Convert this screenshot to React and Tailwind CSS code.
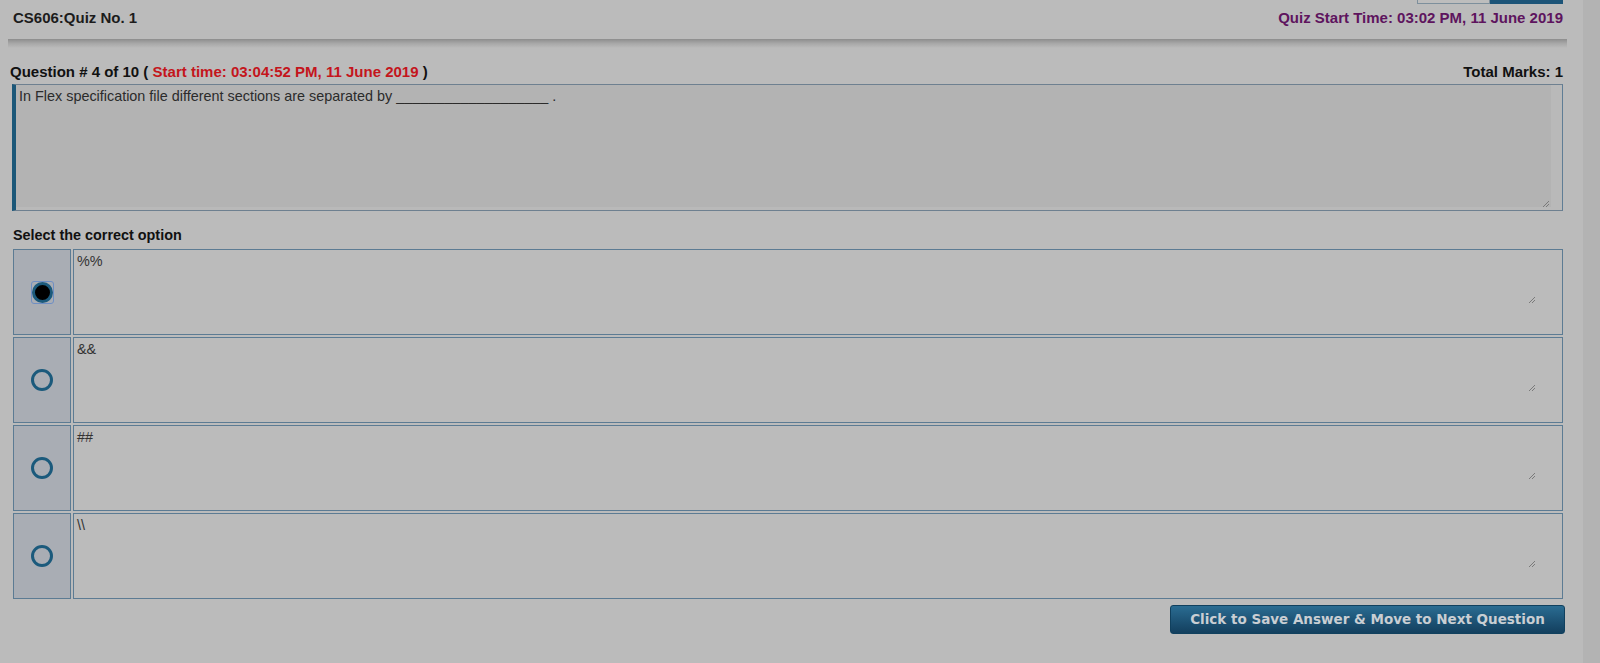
import React from "react";

const options = ["%%", "&&", "##", "\\\\"];

function Radio({ checked }) {
  if (checked) {
    return (
      <div className="w-[23px] h-[23px] rounded-[3px] border border-[#6f8fc4] flex items-center justify-center">
        <div className="w-[21px] h-[21px] rounded-full border-[3px] border-[#1b5a7c] bg-black" />
      </div>
    );
  }
  return <div className="w-[22px] h-[22px] rounded-full border-[3px] border-[#1b5a7c]" />;
}

function Grip() {
  return (
    <svg width="8" height="8" viewBox="0 0 8 8" className="absolute">
      <path d="M7 1 L1 7 M7 4 L4 7" stroke="#7a7a7a" strokeWidth="1" />
    </svg>
  );
}

export default function App() {
  return (
    <div
      className="w-[1600px] h-[663px] bg-[#bbbbbb] flex overflow-hidden"
      style={{ fontFamily: '"Liberation Sans", Arial, sans-serif' }}
    >
      <div className="w-[1583px] flex flex-col">
        {/* top cut-off buttons */}
        <div className="h-[4px] flex justify-end pr-[20px] overflow-hidden">
          <div className="w-[73px] h-[4px] bg-[#bdbdbd] border-x border-b border-[#7d8f9c]" />
          <div className="w-[73px] h-[4px] bg-[#1c5478]" />
        </div>
        {/* header */}
        <div className="h-[28px] flex items-center justify-between pl-[13px] pr-[20px]">
          <span className="text-[15px] font-bold text-[#1c1c1c]">CS606:Quiz No. 1</span>
          <span className="text-[15px] font-bold text-[#5e145e]">
            Quiz Start Time: 03:02 PM, 11 June 2019
          </span>
        </div>
        <div className="mt-[7px] ml-[8px] w-[1559px] h-[9px] bg-gradient-to-b from-[#8d8d8d] via-[#a8a8a8] to-[#bbbbbb]" />

        <div className="ml-[10px] w-[1553px] flex flex-col">
          {/* question line */}
          <div className="mt-[14px] h-[20px] flex items-center justify-between text-[15px] font-bold text-[#111]">
            <span>
              Question # 4 of 10 ({" "}
              <span className="text-[#c4151c]">Start time: 03:04:52 PM, 11 June 2019</span> )
            </span>
            <span>Total Marks: 1</span>
          </div>
          {/* question box */}
          <div className="mt-[2px] ml-[2px] h-[127px] border-l-[4px] border-l-[#1b5778] border-y border-r border-y-[#6e8090] border-r-[#5f7d95] bg-[#b9b9b9] flex flex-col relative">
            <div className="flex flex-1">
              <div className="flex-1 bg-[#b3b3b3] pl-[3px] pt-[3px] text-[14.4px] text-[#2b2b2b] leading-[17px]">
                In Flex specification file different sections are separated by ___________________ .
              </div>
              <div className="w-[11px]" />
            </div>
            <div className="h-[3px]" />
            <div className="absolute right-[12px] bottom-[2px] w-[8px] h-[8px]">
              <Grip />
            </div>
          </div>

          <div className="mt-[15px] h-[20px] flex items-center pl-[3px] text-[14.4px] font-bold text-[#111]">
            Select the correct option
          </div>

          {/* options */}
          <div className="mt-[3px] flex flex-col gap-[2px] pl-[3px]">
            {options.map((o, i) => (
              <div key={i} className="h-[86px] flex gap-[2px]">
                <div className="w-[58px] border border-[#5c7b93] bg-[#a9adb4] flex items-center justify-center">
                  <Radio checked={i === 0} />
                </div>
                <div className="flex-1 border border-[#5c7b93] bg-[#bbbbbb] relative">
                  <div className="pl-[3px] pt-[3px] text-[14.4px] text-[#333] leading-[17px]">{o}</div>
                  <div className="absolute right-[26px] top-[46px] w-[8px] h-[8px]">
                    <Grip />
                  </div>
                </div>
              </div>
            ))}
          </div>

          <div className="mt-[6px] flex justify-end mr-[-2px]">
            <button
              className="w-[395px] h-[29px] rounded-[3px] border border-[#10405e] bg-gradient-to-b from-[#2a6c92] to-[#133f5e] text-[#c9ced3] text-[13.5px] font-bold"
              style={{ fontFamily: '"DejaVu Sans", Verdana, sans-serif' }}
            >
              Click to Save Answer &amp; Move to Next Question
            </button>
          </div>
        </div>
      </div>
      <div className="w-[17px] bg-[#b3b3b3]" />
    </div>
  );
}
